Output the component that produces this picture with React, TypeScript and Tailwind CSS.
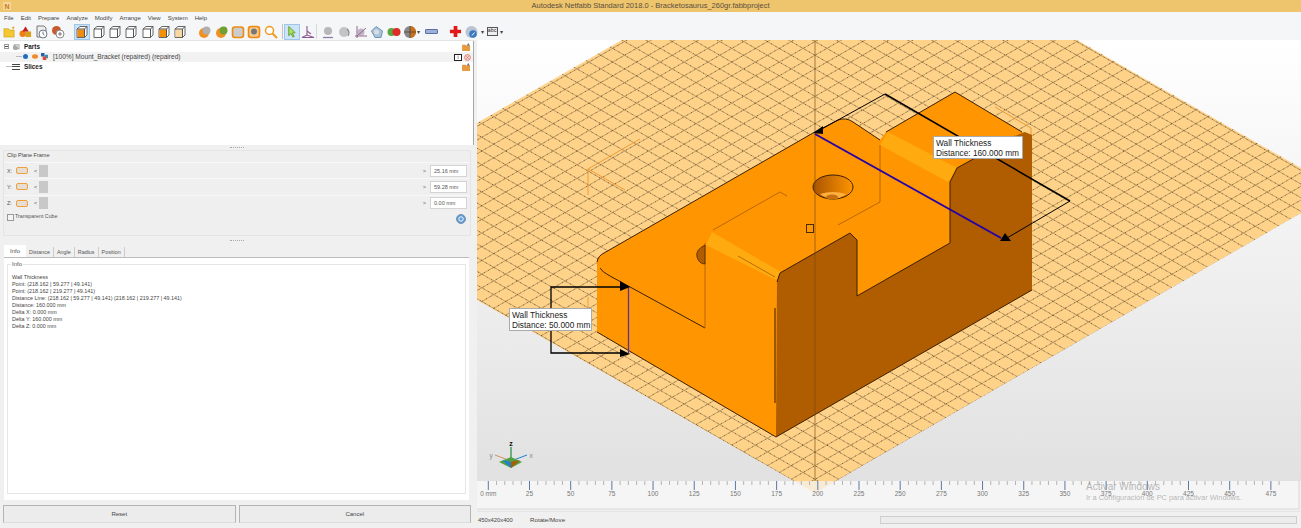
const MENU = ["File", "Edit", "Prepare", "Analyze", "Modify", "Arrange", "View", "System", "Help"];
const INFO_LINES = [
  "Wall Thickness",
  "Point: (218.162 | 59.277 | 49.141)",
  "Point: (218.162 | 219.277 | 49.141)",
  "Distance Line: (218.162 | 59.277 | 49.141) (218.162 | 219.277 | 49.141)",
  "Distance: 160.000 mm",
  "Delta X: 0.000 mm",
  "Delta Y: 160.000 mm",
  "Delta Z: 0.000 mm",
];
const CLIP_ROWS = [
  { axis: "X:", value: "25.16 mm" },
  { axis: "Y:", value: "59.28 mm" },
  { axis: "Z:", value: "0.00 mm" },
];
const TABS = ["Distance", "Angle", "Radius", "Position"];

const PLATE = "477,123 622,40 1077,40 1301,168 1301,213 815,493 477,300";
const GRID_STEPS = Array.from({ length: 90 }, (_, i) => i);
const RULER_MM = Array.from({ length: 100 }, (_, i) => i * 5).filter((mm) => mm <= 480);

function Cube({ face }: { face?: "left" | "full" | "right" }) {
  return (
    <svg viewBox="0 0 14 14" className="h-[14px] w-[14px]">
      <path d="M2 4 5 1.5h7v8.5L9.500 12.500H2z" fill="#fff" stroke="#666" />
      {face === "left" && <path d="M2.500 4.500h7v7.500h-7z" fill="#f08c10" />}
      {face === "full" && <path d="M2.500 4.500h7v7.500h-7z" fill="#f59000" />}
      {face === "right" && <path d="M2.500 4.500h7v7.500h-7z" fill="#f8d7a4" />}
      <path d="M2 4h7.500v8.500M9.500 4 12 1.500" fill="none" stroke="#555" />
    </svg>
  );
}

function RoundIcon({ a, b }: { a: string; b: string }) {
  return (
    <svg viewBox="0 0 14 14" className="h-[14px] w-[14px]">
      <circle cx="6" cy="8" r="5" fill={a} />
      <circle cx="8.500" cy="5.500" r="4" fill={b} />
    </svg>
  );
}

function Tool({ children, active }: { children: React.ReactNode; active?: boolean }) {
  return (
    <div
      className={`flex h-[16px] w-[16.300px] shrink-0 items-center justify-center border ${
        active ? "border-[#9ec6ea] bg-[#cde4f7]" : "border-transparent"
      }`}
    >
      {children}
    </div>
  );
}

function Toolbar() {
  return (
    <div className="flex h-[17px] items-center bg-[#f5f6f7] pl-[1px]">
      <Tool>
        <svg viewBox="0 0 14 14" className="h-[13px] w-[13px]">
          <path d="M1 4h5l1 1.500h5V13H1z" fill="#f5c730" stroke="#c49a10" strokeWidth=".6" />
          <path d="M11 1l.6 1.500L13 3l-1.400.6L11 5l-.6-1.400L9 3l1.400-.5z" fill="#e8a010" />
        </svg>
      </Tool>
      <Tool>
        <svg viewBox="0 0 14 14" className="h-[13px] w-[13px]">
          <circle cx="4" cy="9.500" r="3.500" fill="#ef7d1a" />
          <rect x="7" y="7" width="6" height="6" fill="#d8a020" />
          <path d="M7 1.500 10.500 7h-7z" fill="#c02020" />
        </svg>
      </Tool>
      <Tool>
        <svg viewBox="0 0 14 14" className="h-[14px] w-[14px]">
          <path d="M2 1h7l2 2v9H2z" fill="#eee" stroke="#777" />
          <circle cx="8" cy="9" r="4" fill="#fff" stroke="#6a7a8a" />
          <path d="M8 6.500V9l1.500 1" fill="none" stroke="#6a7a8a" />
        </svg>
      </Tool>
      <Tool>
        <svg viewBox="0 0 14 14" className="h-[14px] w-[14px]">
          <circle cx="5.500" cy="5.500" r="4.500" fill="#c85a30" />
          <circle cx="9" cy="9" r="4" fill="#fff" stroke="#888" />
          <path d="M9 7v4M7 9h4" stroke="#777" />
        </svg>
      </Tool>
      <div className="w-[8px] shrink-0" />
      <Tool active>
        <Cube face="left" />
      </Tool>
      <Tool>
        <Cube />
      </Tool>
      <Tool>
        <Cube />
      </Tool>
      <Tool>
        <Cube />
      </Tool>
      <Tool>
        <Cube />
      </Tool>
      <Tool>
        <Cube face="full" />
      </Tool>
      <Tool>
        <Cube face="right" />
      </Tool>
      <div className="w-[9px] shrink-0" />
      <Tool>
        <RoundIcon a="#f09020" b="#b0b0b0" />
      </Tool>
      <Tool>
        <RoundIcon a="#f09020" b="#70a030" />
      </Tool>
      <Tool>
        <svg viewBox="0 0 14 14" className="h-[14px] w-[14px]">
          <rect x="1.500" y="2" width="11" height="10.500" rx="2.500" fill="#ccc" stroke="#ee8a10" strokeWidth="1.600" />
        </svg>
      </Tool>
      <Tool>
        <svg viewBox="0 0 14 14" className="h-[14px] w-[14px]">
          <rect x="1.500" y="1.500" width="11" height="11" rx="2.500" fill="#f5c890" stroke="#ee8a10" strokeWidth="1.600" />
          <circle cx="7" cy="6.500" r="3" fill="#777" />
        </svg>
      </Tool>
      <Tool>
        <svg viewBox="0 0 14 14" className="h-[14px] w-[14px]">
          <circle cx="5.500" cy="5.500" r="4" fill="#fff" stroke="#f09a20" strokeWidth="1.500" />
          <path d="M8.500 8.500 13 13" stroke="#f09a20" strokeWidth="2" />
        </svg>
      </Tool>
      <div className="w-[3px] shrink-0" />
      <div className="mr-[1px] h-[15px] w-px bg-[#c4c4c4]" />
      <Tool active>
        <svg viewBox="0 0 14 14" className="h-[13px] w-[13px]">
          <path d="M4 1.500v10l2.500-2.200 2 3.700 1.500-.8-2-3.500 3-.5z" fill="#a8e060" stroke="#4d8c20" strokeWidth=".8" />
        </svg>
      </Tool>
      <Tool>
        <svg viewBox="0 0 14 14" className="h-[14px] w-[14px]">
          <path d="M6 1v9M1 12.500 6 10l7 2.500H1zM6 6l4 3" fill="none" stroke="#8a5a90" strokeWidth="1.100" />
        </svg>
      </Tool>
      <div className="mr-[3px] h-[15px] w-px bg-[#d8d8d8]" />
      <Tool>
        <svg viewBox="0 0 14 14" className="h-[14px] w-[14px]">
          <circle cx="7" cy="6" r="4" fill="#b8b8b8" />
          <path d="M2 12.500h10" stroke="#8a7aa0" strokeWidth="1.200" />
        </svg>
      </Tool>
      <Tool>
        <svg viewBox="0 0 14 14" className="h-[14px] w-[14px]">
          <circle cx="6" cy="7" r="5" fill="#c4c4c4" />
          <path d="M9 4a5 5 0 0 1 1 7" fill="none" stroke="#888" strokeWidth="1.200" />
        </svg>
      </Tool>
      <Tool>
        <svg viewBox="0 0 14 14" className="h-[14px] w-[14px]">
          <circle cx="7" cy="7" r="3.500" fill="#c0b4c8" />
          <path d="M3 1v12M1 11h12M3 11l9-8" stroke="#8a5a80" strokeWidth=".9" />
        </svg>
      </Tool>
      <Tool>
        <svg viewBox="0 0 14 14" className="h-[14px] w-[14px]">
          <path d="M1.500 6 6 1.500l6.500 4.500-1.500 6.500H5z" fill="#a8c4dc" stroke="#6a94b8" />
          <circle cx="6.500" cy="7" r="2.500" fill="#ddd" />
        </svg>
      </Tool>
      <Tool>
        <svg viewBox="0 0 14 14" className="h-[14px] w-[14px]">
          <circle cx="4.500" cy="7" r="4" fill="#5aa840" />
          <circle cx="9.500" cy="7" r="4" fill="#e02a2a" />
        </svg>
      </Tool>
      <Tool>
        <svg viewBox="0 0 14 14" className="h-[14px] w-[14px]">
          <circle cx="7" cy="7" r="6" fill="#888" />
          <path d="M7 1a6 6 0 0 1 0 12z" fill="#c8701a" />
          <path d="M7 1v12M1 7h12" stroke="#333" strokeWidth=".6" />
        </svg>
      </Tool>
      <span className="ml-[-1px] text-[6px] leading-none text-[#444]">▾</span>
      <div className="ml-[3px] flex h-[16px] w-[16px] shrink-0 items-center justify-center">
        <div className="h-[5px] w-[13px] rounded-[1px] border border-[#5a6fa8] bg-[#9fb0d8]" />
      </div>
      <div className="w-[8px] shrink-0" />
      <Tool>
        <svg viewBox="0 0 14 14" className="h-[13px] w-[13px]">
          <path d="M5 1h4v4h4v4H9v4H5V9H1V5h4z" fill="#e01818" />
        </svg>
      </Tool>
      <Tool>
        <svg viewBox="0 0 14 14" className="h-[14px] w-[14px]">
          <circle cx="6.500" cy="7" r="6" fill="#b8c4d4" />
          <circle cx="8" cy="9" r="3.800" fill="#3a78c0" />
          <path d="M7 10.500 9.500 7.500" stroke="#fff" />
        </svg>
      </Tool>
      <span className="ml-[1px] text-[6px] leading-none text-[#444]">▾</span>
      <div className="ml-[3px] w-[11px] border border-[#555] bg-[#eee] text-center font-['Liberation_Mono',monospace] text-[5px] leading-[7px] text-[#222]">
        abc
      </div>
      <span className="ml-[2px] text-[6px] leading-none text-[#444]">▾</span>
    </div>
  );
}

function TreeRow({
  children,
  right,
  className,
}: {
  children: React.ReactNode;
  right: React.ReactNode;
  className?: string;
}) {
  return (
    <div className={`flex h-[10px] items-center justify-between pr-[2px] ${className ?? ""}`}>
      <div className="flex items-center">{children}</div>
      <div className="flex items-center gap-[2px]">{right}</div>
    </div>
  );
}

function FolderIcon() {
  return (
    <svg viewBox="0 0 10 9" className="h-[8px] w-[9px]">
      <path d="M0 2h4l1 1h4v6H0z" fill="#e89a40" />
      <path d="M5 3 7 0l2 3z" fill="#777" />
    </svg>
  );
}

function PartsTree() {
  return (
    <div className="h-[104px] border-r border-[#a8a8a8] bg-white pt-[1px] text-[6.400px] text-[#333]">
      <TreeRow right={<FolderIcon />}>
        <div className="ml-[4px] flex h-[5px] w-[5px] items-center justify-center border border-[#999] bg-white">
          <div className="h-px w-[3px] bg-[#555]" />
        </div>
        <svg viewBox="0 0 10 10" className="ml-[3px] h-[9px] w-[9px]">
          <circle cx="4" cy="6" r="3" fill="#aaa" />
          <path d="M2 3h6v5z" fill="#d8d8d8" stroke="#888" strokeWidth=".6" />
        </svg>
        <span className="ml-[3px] font-bold text-[#222]">Parts</span>
      </TreeRow>
      <TreeRow
        className="bg-[#f2f2f2]"
        right={
          <>
            <div className="flex h-[7px] w-[8px] items-center justify-center border border-[#222] bg-white text-[5px] leading-none">
              i
            </div>
            <svg viewBox="0 0 8 8" className="h-[7px] w-[7px]">
              <circle cx="4" cy="4" r="3.300" fill="#f6dcd8" stroke="#d05a4a" strokeWidth=".8" />
              <path d="M2.500 2.500l3 3M5.500 2.500l-3 3" stroke="#d05a4a" strokeWidth=".7" />
            </svg>
          </>
        }
      >
        <div className="ml-[16px] h-px w-[6px] bg-[#bbb]" />
        <div className="ml-[1px] h-[5px] w-[5px] rounded-full bg-[#1f6fc0]" />
        <svg viewBox="0 0 8 6" className="ml-[4px] h-[5px] w-[6px]">
          <ellipse cx="4" cy="3" rx="4" ry="3" fill="#ef8a2a" />
        </svg>
        <svg viewBox="0 0 8 8" className="ml-[3px] h-[7px] w-[7px]">
          <rect width="4" height="4" fill="#2a5fb0" />
          <rect x="4" y="2" width="4" height="4" fill="#3a8fb0" />
          <rect x="2" y="4" width="4" height="4" fill="#e04a30" />
        </svg>
        <span className="ml-[5px] text-[6.600px] text-[#444]">[100%] Mount_Bracket (repaired) (repaired)</span>
      </TreeRow>
      <TreeRow right={<FolderIcon />}>
        <div className="ml-[6px] h-px w-[6px] bg-[#bbb]" />
        <div className="flex h-[6px] w-[8px] flex-col justify-between">
          <div className="h-px bg-[#444]" />
          <div className="h-px bg-[#444]" />
          <div className="h-px bg-[#444]" />
        </div>
        <span className="ml-[4px] font-bold text-[#222]">Slices</span>
      </TreeRow>
    </div>
  );
}

function DragDots() {
  return <div className="h-px w-[14px] border-t border-dotted border-[#aaa]" />;
}

function ClipPanel() {
  return (
    <div className="mx-[3px] flex h-[86px] flex-col rounded-[2px] border border-[#e4e4e4] bg-[#efefef]">
      <div className="h-[11px] pl-[3px] text-[5.500px] leading-[9px] text-[#444]">Clip Plane Frame</div>
      <div className="flex flex-col">
        {CLIP_ROWS.map((row) => (
          <div key={row.axis} className="flex h-[16.300px] items-center border-t border-[#f8f8f8] pl-[3px] pr-[3px] text-[5.500px] text-[#555]">
            <span className="w-[9px]">{row.axis}</span>
            <div className="h-[7px] w-[12px] rounded-[2px] border border-[#ef9f40] bg-[#e6ded2]" />
            <span className="ml-[6px] w-[5px]">&lt;</span>
            <div className="h-[12px] w-[9px] bg-[#c8c8c8]" />
            <div className="flex-1" />
            <span className="mr-[4px]">&gt;</span>
            <div className="flex h-[12px] w-[37px] items-center border border-[#d4d4d4] bg-white pl-[3px] text-[#555]">
              {row.value}
            </div>
          </div>
        ))}
      </div>
      <div className="flex items-center justify-between pl-[3px] pr-[4px]">
        <div className="flex items-center">
          <div className="h-[7px] w-[7px] border border-[#999] bg-[#f4f4f4]" />
          <span className="ml-[1px] text-[5.300px] text-[#555]">Transparent Cube</span>
        </div>
        <svg viewBox="0 0 10 10" className="mt-[3px] h-[10px] w-[10px]">
          <circle cx="5" cy="5" r="4.500" fill="#5b9ad6" stroke="#7a94ac" />
          <circle cx="5" cy="5" r="2.200" fill="none" stroke="#fff" />
        </svg>
      </div>
    </div>
  );
}

function InfoPanel() {
  return (
    <div className="flex flex-col pl-[4px] pr-[5px]">
      <div className="flex h-[12px] items-end text-[5.400px] text-[#555]">
        <div className="flex h-[12px] w-[22px] items-center justify-center bg-white text-[6px]">Info</div>
        {TABS.map((tab) => (
          <div key={tab} className="flex h-[10px] items-center border-r border-[#ccc] px-[3px]">
            {tab}
          </div>
        ))}
      </div>
      <div className="h-[243px] border-t border-[#bbb] bg-white px-[3px] pt-[6px]">
        <div className="relative h-[230px] border border-[#e6e6e6] pl-[4px] pt-[9px]">
          <span className="absolute left-[3px] top-[-4px] bg-white px-px text-[6px] leading-[7px] text-[#555]">Info</span>
          {INFO_LINES.map((line) => (
            <div key={line} className="h-[7px] whitespace-nowrap text-[5.400px] leading-[7px] text-[#444]">
              {line}
            </div>
          ))}
        </div>
      </div>
    </div>
  );
}

function Viewport() {
  return (
    <svg viewBox="477 40 824 471" className="block h-[471px] w-[824px]">
      <defs>
        <linearGradient id="bg" x1="0" y1="0" x2="0" y2="1">
          <stop offset="0" stopColor="#ffffff" />
          <stop offset="1" stopColor="#e1e1e1" />
        </linearGradient>
        <linearGradient id="hole" x1="0" y1="0" x2="1" y2="0">
          <stop offset="0" stopColor="#a85400" />
          <stop offset="1" stopColor="#ff9500" />
        </linearGradient>
        <clipPath id="plate">
          <polygon points={PLATE} />
        </clipPath>
        <clipPath id="rulerclip">
          <rect x="477" y="481" width="822" height="28" />
        </clipPath>
      </defs>
      <rect x="477" y="40" width="824" height="441" fill="url(#bg)" />
      <polygon points={PLATE} fill="#ffd38a" />
      {/* grid: thin brown line with sparse black dots on top */}
      <g clipPath="url(#plate)" stroke="#5a4526" strokeWidth=".6" opacity=".6">
        {GRID_STEPS.map((k) => (
          <line key={`a${k}`} x1={815 - 11.9 * k} y1={493 - 6.84 * k} x2={815 - 11.9 * k + 1190} y2={493 - 6.84 * k - 684} />
        ))}
        {GRID_STEPS.map((k) => (
          <line key={`b${k}`} x1={815 + 11.9 * k} y1={493 - 6.84 * k} x2={815 + 11.9 * k - 1190} y2={493 - 6.84 * k - 684} />
        ))}
      </g>
      <g clipPath="url(#plate)" stroke="#000" strokeWidth=".8" strokeDasharray="1 4" opacity=".55">
        {GRID_STEPS.map((k) => (
          <line key={`c${k}`} x1={815 - 11.9 * k} y1={493 - 6.84 * k} x2={815 - 11.9 * k + 1190} y2={493 - 6.84 * k - 684} />
        ))}
        {GRID_STEPS.map((k) => (
          <line key={`d${k}`} x1={815 + 11.9 * k} y1={493 - 6.84 * k} x2={815 + 11.9 * k - 1190} y2={493 - 6.84 * k - 684} />
        ))}
      </g>

      {/* faint outline of the clip box */}
      <path d="M640 139 588 169 625 190M588 169V195M588 297V307M995 107l36 21v7" fill="none" stroke="#f09a30" />

      {/* bracket */}
      <path
        d="M597 262Q597 256 604 253L813 133 838 120Q846 117 853 122L880 140 886 132 955 92 1022 132 1032 135V290L776 437 597 332Z"
        fill="#ff9500"
      />
      <path
        d="M776 437 1032 290V135L1025 132 1015 136 957 168 950 182V243L857 296V240L850 233 780 273 777 282Z"
        fill="#b05c00"
      />
      <path d="M712 232 706 245 776 280 781 272Z" fill="#ffab10" />
      <path d="M888 132 880 145 948 182 957 168Z" fill="#ffab10" />
      <path
        d="M777 282 780 273 850 233 857 240M857 240V296L950 243V182L957 168 1015 136M600 268Q602 272 610 276L705 328M597 332 776 437 1032 290M955 92 1022 132M813 133 838 120Q846 117 853 122L880 140M886 132 955 92M597 262Q598 256 604 253L813 133"
        fill="none"
        stroke="#3a2000"
        strokeWidth="1"
      />
      <path d="M775 308V403" stroke="#7a4400" strokeWidth="1.500" />
      <path d="M705 243V328M880 145V202L838 225M713 230 780 192 787 196M738 256 775 277" fill="none" stroke="#a85c00" strokeWidth=".8" />
      <path d="M705 245Q695 250 697 257T705 264Z" fill="#b05c00" stroke="#3a2000" strokeWidth=".7" />
      <ellipse cx="833" cy="187" rx="20" ry="12" fill="url(#hole)" stroke="#3a2000" />
      <path d="M820 194Q833 204 846 194 833 190 820 194Z" fill="#ffb040" />
      <ellipse cx="832" cy="197" rx="6" ry="2.500" fill="#c87010" />
      <rect x="806.500" y="224.500" width="7" height="8" fill="none" stroke="#4a2a00" />
      <path d="M815 40V481" stroke="#7a4a10" strokeOpacity=".65" />

      {/* measurements */}
      <path d="M1001 238 815 134" stroke="#2500a8" strokeWidth="2" />
      <path d="M820 130 885 94M1070 201 1007 238" fill="none" stroke="#000" />
      <path d="M885 94 1070 201" stroke="#000" strokeWidth="1.500" />
      <path d="M813 133 823 126 823 134Z M1000 241 1005 233 1011 241Z" fill="#000" />
      <path d="M625 287H551V353H625" fill="none" stroke="#000" strokeWidth="1.300" />
      <path d="M628.500 286V353" stroke="#6030a0" strokeWidth="1.300" />
      <path d="M620 281 630 287 620 291ZM620 349 630 354 620 357Z" fill="#000" />

      {/* axis gizmo */}
      <path d="M511 461V447" stroke="#1f8a3a" strokeWidth="1.200" />
      <path d="M511 461 495 455" stroke="#d09060" />
      <path d="M511 461 527 455" stroke="#2080d0" />
      <path d="M499 462 511 457 522 462 511 468Z" fill="#4fa040" />
      <path d="M502 460 511 462V468Z" fill="#2080d0" />
      <path d="M520 460 511 462V468Z" fill="#b05a00" />
      <text x="511" y="446" textAnchor="middle" fontSize="7" fontWeight="700" fill="#111">z</text>
      <text x="491" y="458" textAnchor="middle" fontSize="6.500" fill="#888">y</text>
      <text x="531" y="458" textAnchor="middle" fontSize="6.500" fill="#888">x</text>

      {/* ruler */}
      <rect x="477" y="481" width="822" height="28" fill="#f5f5f5" />
      <polygon points={PLATE} fill="#ffd38a" opacity=".3" clipPath="url(#rulerclip)" />
      <path d="M477 509H1299V481" fill="none" stroke="#d8d8d8" />
      {RULER_MM.map((mm) => {
        const x = 488.3 + mm * 1.6475;
        const major = mm % 25 === 0;
        return (
          <g key={mm}>
            <line x1={x} x2={x} y1={481} y2={major ? 490 : 485} stroke={major ? "#5a78a8" : "#b4b4b4"} />
            {major && mm <= 475 && (
              <text x={x} y={496} textAnchor="middle" fontSize="6.500" fill="#777">
                {mm === 0 ? "0 mm" : mm}
              </text>
            )}
          </g>
        );
      })}
    </svg>
  );
}

function Callout({ distance, className }: { distance: string; className: string }) {
  return (
    <div className={`absolute whitespace-nowrap border border-[#aaa] bg-white pl-[2px] pt-px text-[8.300px] leading-[10px] text-[#222] ${className}`}>
      <div>Wall Thickness</div>
      <div>Distance: {distance}</div>
    </div>
  );
}

export default function App() {
  return (
    <div className="flex h-[528px] w-[1301px] flex-col overflow-hidden bg-[#f0f0f0] font-['Liberation_Sans',sans-serif]">
      <div className="relative flex h-[12px] items-center justify-center bg-[#eec46c] text-[7.500px] leading-none text-[#5a5040]">
        <div className="absolute left-[3px] top-[2px] flex h-[8px] w-[8px] items-center justify-center bg-[#f4d69a] text-[7px] font-bold leading-none text-[#d07a20]">
          N
        </div>
        Autodesk Netfabb Standard 2018.0 - Bracketosaurus_260gr.fabbproject
      </div>
      <div className="flex h-[11px] items-center gap-[7px] bg-[#f5f6f7] pl-[4px] text-[6px] leading-none text-[#444]">
        {MENU.map((item) => (
          <span key={item}>{item}</span>
        ))}
      </div>
      <Toolbar />

      <div className="flex min-h-0 flex-1">
        <div className="flex w-[474px] shrink-0 flex-col border-t border-[#e4e4e4]">
          <PartsTree />
          <div className="flex h-[5px] items-center justify-center">
            <DragDots />
          </div>
          <ClipPanel />
          <div className="flex h-[9px] items-center justify-center">
            <DragDots />
          </div>
          <InfoPanel />
          <div className="mt-[5px] flex gap-[3px] pl-[3px] pr-[3px]">
            {["Reset", "Cancel"].map((label) => (
              <div
                key={label}
                className="flex h-[18px] flex-1 items-center justify-center border border-[#b4b4b4] border-b-[#dcdcdc] bg-[#ececec] text-[6px] text-[#444]"
              >
                {label}
              </div>
            ))}
          </div>
        </div>

        <div className="relative ml-[3px] flex min-w-0 flex-1 flex-col">
          <Viewport />
          <Callout distance="50.000 mm" className="left-[32px] top-[268px] h-[23px] w-[83px]" />
          <Callout distance="160.000 mm" className="left-[456px] top-[96px] h-[23px] w-[90px]" />
          <div className="pointer-events-none absolute left-[609px] top-[442px] whitespace-nowrap leading-none text-[#999]/70">
            <div className="text-[10px]">Activar Windows</div>
            <div className="mt-[2px] text-[7.400px]">Ir a Configuración de PC para activar Windows.</div>
          </div>
          <div className="flex h-[17px] items-center border-t border-[#e4e4e4] text-[5.800px] text-[#444]">
            <span className="w-[53px] pl-[1px]">450x420x400</span>
            <span className="w-[350px] text-[6.200px]">Rotate/Move</span>
            <div className="h-[8px] w-[417px] border border-[#cfcfcf] bg-[#ececec]" />
          </div>
        </div>
      </div>
    </div>
  );
}
